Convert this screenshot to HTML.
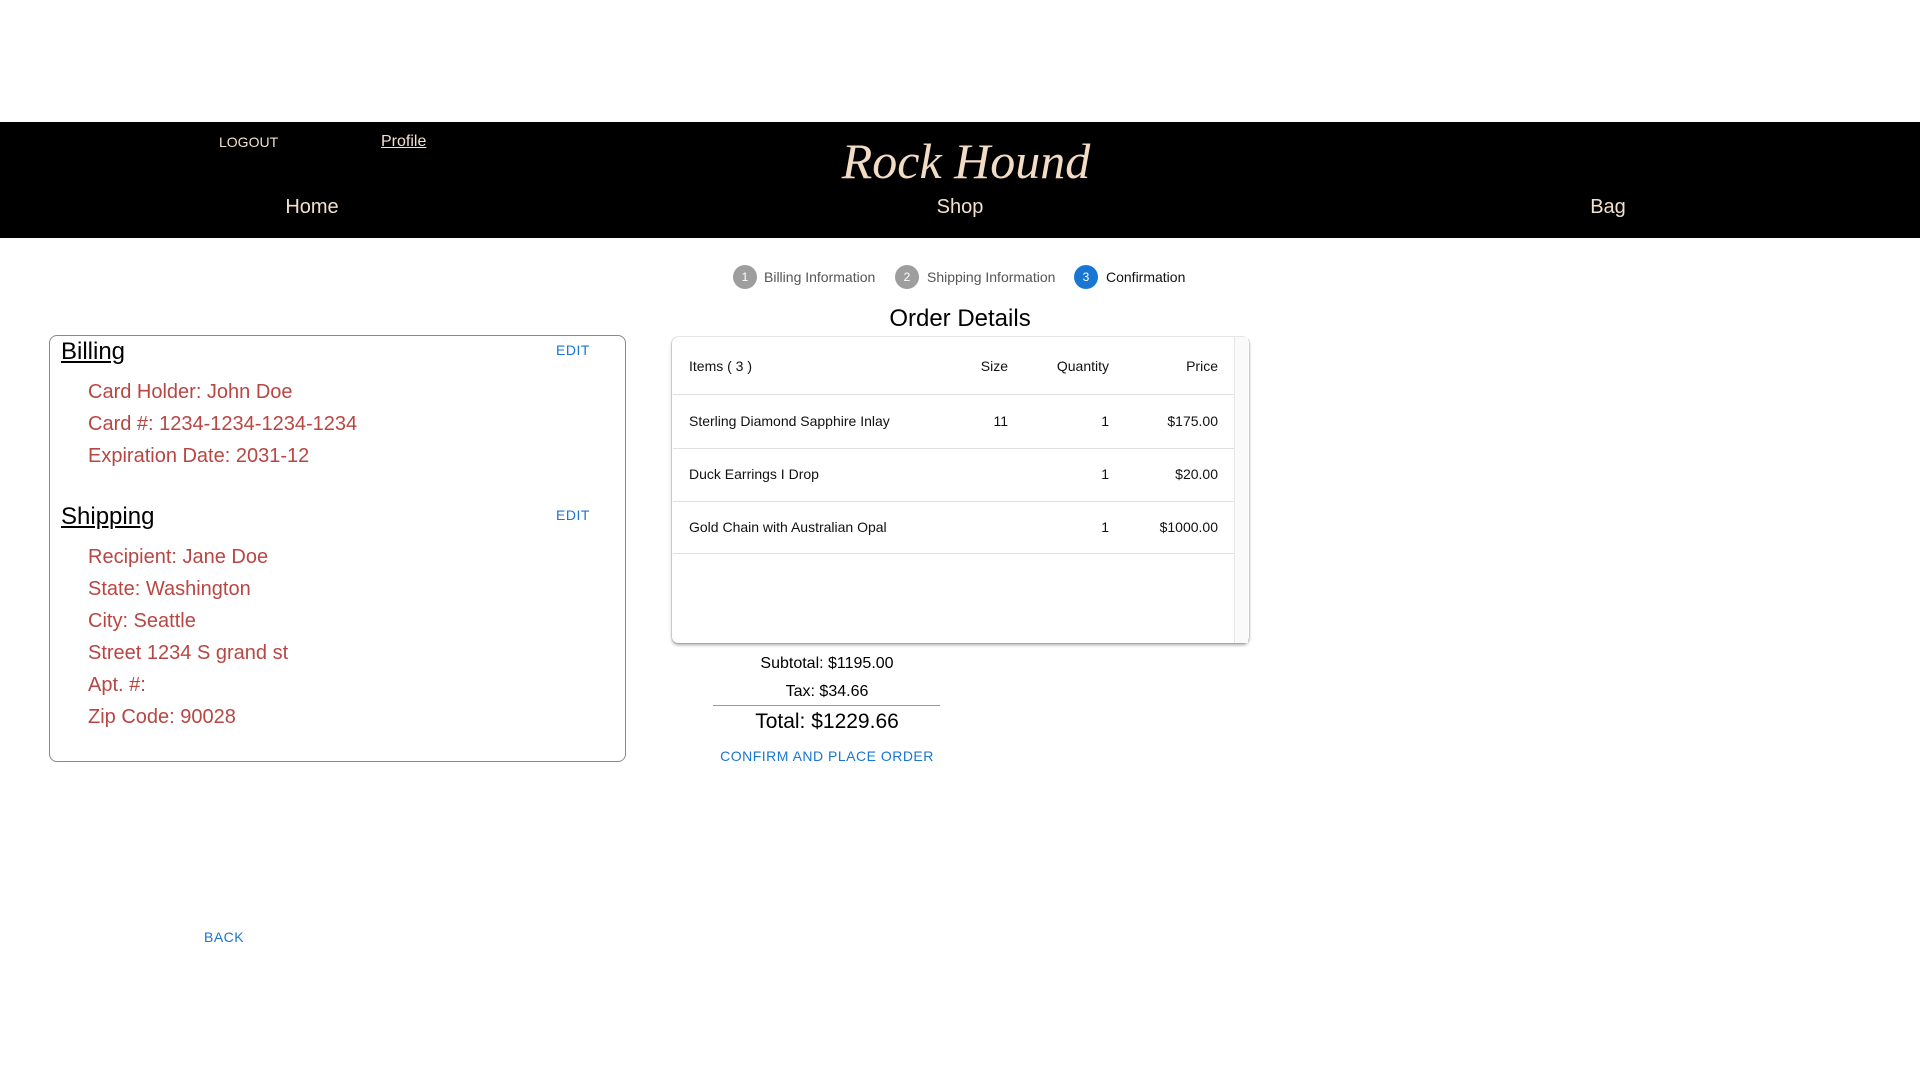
<!DOCTYPE html>
<html><head><meta charset="utf-8"><style>
*{margin:0;padding:0;box-sizing:border-box}
body{width:1920px;height:1080px;background:#fff;font-family:"Liberation Sans",Arial,sans-serif;position:relative;overflow:hidden}
.a{position:absolute;white-space:nowrap}
.hdr{position:absolute;left:0;top:122px;width:1920px;height:116px;background:#000}
.nav{color:#f3e1cf;font-size:20px;transform:translateX(-50%)}
.step{font-size:14px;color:#555}
.c{position:absolute;width:24px;height:24px;border-radius:50%;background:#9e9e9e;color:#fff;font-size:12px;text-align:center;line-height:24px}
.red{color:#b84643;font-size:20px;left:88px}
.blue{color:#1976d2;font-size:14px;letter-spacing:.5px}
.t{font-size:14px;color:#111}
.r{text-align:right}
</style></head><body>
<div class="hdr"></div>
<div class="a" style="left:219px;top:134px;color:#f3e1cf;font-size:14px">LOGOUT</div>
<div class="a" style="left:381px;top:133px;color:#f3e1cf;font-size:16px;text-decoration:underline">Profile</div>
<div class="a" style="left:966px;top:132px;transform:translateX(-50%);color:#f3dcc4;font-family:'Liberation Serif',serif;font-style:italic;font-size:50px">Rock Hound</div>
<div class="a nav" style="left:312px;top:196px">Home</div>
<div class="a nav" style="left:960px;top:196px">Shop</div>
<div class="a nav" style="left:1608px;top:196px">Bag</div>

<div class="c" style="left:733px;top:265px">1</div><div class="a step" style="left:764px;top:269px">Billing Information</div>
<div class="c" style="left:895px;top:265px">2</div><div class="a step" style="left:927px;top:269px">Shipping Information</div>
<div class="c" style="left:1074px;top:265px;background:#1976d2">3</div><div class="a step" style="left:1106px;top:269px;color:#111">Confirmation</div>

<div class="a" style="left:960px;top:305px;transform:translateX(-50%);font-size:24px;color:#000">Order Details</div>

<div class="a" style="left:49px;top:335px;width:577px;height:427px;border:1px solid #888;border-radius:8px"></div>
<div class="a" style="left:61px;top:338px;font-size:24px;text-decoration:underline">Billing</div>
<div class="a blue" style="left:556px;top:342px">EDIT</div>
<div class="a red" style="top:381px">Card Holder: John Doe</div>
<div class="a red" style="top:413px">Card #: 1234-1234-1234-1234</div>
<div class="a red" style="top:445px">Expiration Date: 2031-12</div>
<div class="a" style="left:61px;top:503px;font-size:24px;text-decoration:underline">Shipping</div>
<div class="a blue" style="left:556px;top:507px">EDIT</div>
<div class="a red" style="top:546px">Recipient: Jane Doe</div>
<div class="a red" style="top:578px">State: Washington</div>
<div class="a red" style="top:610px">City: Seattle</div>
<div class="a red" style="top:642px">Street 1234 S grand st</div>
<div class="a red" style="top:674px">Apt. #:</div>
<div class="a red" style="top:706px">Zip Code: 90028</div>

<div class="a" style="left:672px;top:337px;width:577px;height:306px;border-radius:6px;box-shadow:0 2px 3px rgba(0,0,0,.35),0 0 1px rgba(0,0,0,.5);background:#fff"></div>
<div class="a" style="left:1234px;top:337px;width:14px;height:306px;background:#fafafa;border-left:1px solid #e6e6e6"></div>
<div class="a" style="left:673px;top:394px;width:561px;height:1px;background:#e0e0e0"></div>
<div class="a" style="left:673px;top:448px;width:561px;height:1px;background:#e0e0e0"></div>
<div class="a" style="left:673px;top:501px;width:561px;height:1px;background:#e0e0e0"></div>
<div class="a" style="left:673px;top:553px;width:561px;height:1px;background:#e0e0e0"></div>
<div class="a t" style="left:689px;top:358px">Items ( 3 )</div>
<div class="a t r" style="right:912px;top:358px">Size</div>
<div class="a t r" style="right:811px;top:358px">Quantity</div>
<div class="a t r" style="right:702px;top:358px">Price</div>
<div class="a t" style="left:689px;top:413px">Sterling Diamond Sapphire Inlay</div>
<div class="a t" style="right:912px;top:413px">11</div>
<div class="a t" style="right:811px;top:413px">1</div>
<div class="a t" style="right:702px;top:413px">$175.00</div>
<div class="a t" style="left:689px;top:466px">Duck Earrings I Drop</div>
<div class="a t" style="right:811px;top:466px">1</div>
<div class="a t" style="right:702px;top:466px">$20.00</div>
<div class="a t" style="left:689px;top:519px">Gold Chain with Australian Opal</div>
<div class="a t" style="right:811px;top:519px">1</div>
<div class="a t" style="right:702px;top:519px">$1000.00</div>

<div class="a" style="left:827px;top:655px;transform:translateX(-50%);font-size:16px">Subtotal: $1195.00</div>
<div class="a" style="left:827px;top:683px;transform:translateX(-50%);font-size:16px">Tax: $34.66</div>
<div class="a" style="left:713px;top:705px;width:227px;height:1px;background:#999"></div>
<div class="a" style="left:827px;top:710px;transform:translateX(-50%);font-size:21px">Total: $1229.66</div>
<div class="a blue" style="left:827px;top:748px;transform:translateX(-50%)">CONFIRM AND PLACE ORDER</div>
<div class="a blue" style="left:204px;top:929px">BACK</div>
</body></html>
